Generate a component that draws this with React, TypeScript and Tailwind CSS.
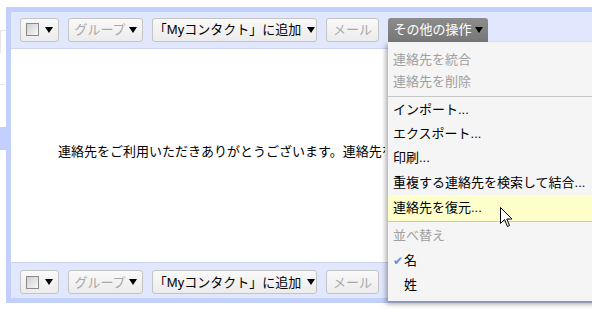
import React from 'react';

const font = { fontFamily: '"Liberation Sans", "Noto Sans CJK JP", sans-serif' };

const Caret = ({ color = '#000' }: { color?: string }) => (
  <svg width="8" height="6" viewBox="0 0 8 6" className="shrink-0">
    <path d="M0 0 H8 L4 6 Z" fill={color} />
  </svg>
);

const Btn: React.FC<{ w: string; children: React.ReactNode; dim?: boolean }> = ({ w, children, dim }) => (
  <div
    className={`${w} h-6 shrink-0 flex items-center justify-center gap-[3px] rounded-[3px] border border-[#c4c4c4] bg-gradient-to-b from-[#f9f9f9] to-[#ececec] text-[13px] leading-none ${dim ? 'text-[#a8a8a8]' : 'text-black'}`}
  >
    {children}
  </div>
);

const Toolbar: React.FC<{ withMore?: boolean }> = ({ withMore }) => (
  <>
    <Btn w="w-[39px]">
      <span className="w-[13px] h-[13px] border border-[#8a8a8a] bg-gradient-to-br from-[#cfcfcf] to-[#f8f8f8]" />
      <span className="ml-[3px]"><Caret /></span>
    </Btn>
    <Btn w="w-[75px]" dim>
      グループ<Caret />
    </Btn>
    <Btn w="w-[165px]">
      「Myコンタクト」に追加 <span className="ml-[3px]"><Caret /></span>
    </Btn>
    <Btn w="w-[53px]" dim>
      メール
    </Btn>
    {withMore && (
      <div className="relative shrink-0">
        <div className="w-[100px] h-6 flex items-center justify-center gap-[3px] rounded-t-[3px] bg-gradient-to-b from-[#8c8c8c] to-[#777] text-white text-[13px] leading-none">
          その他の操作<Caret />
        </div>
        <MoreMenu />
      </div>
    )}
  </>
);

const Item: React.FC<{ h?: string; dim?: boolean; hot?: boolean; children: React.ReactNode }> = ({ h = 'h-6', dim, hot, children }) => (
  <div className={`${h} flex items-center pl-[5px] whitespace-nowrap ${dim ? 'text-[#a0a0a0]' : 'text-black'} ${hot ? 'bg-[#ffffcc]' : ''}`}>
    {children}
  </div>
);

const MoreMenu = () => (
  <div className="absolute left-0 top-full z-10 w-[230px] bg-[#f5f5f5] pt-[7px] pb-[4px] text-[13px] leading-none shadow-[-2px_3px_5px_rgba(0,0,0,0.35)]">
    <Item h="h-[22px]" dim>連絡先を統合</Item>
    <Item h="h-[22px]" dim>連絡先を削除</Item>
    <div className="mt-[3px] mb-px h-px bg-[#c8c8c8]" />
    <Item>インポート...</Item>
    <Item>エクスポート...</Item>
    <Item>印刷...</Item>
    <Item h="h-[25px]">重複する連絡先を検索して結合...</Item>
    <Item h="h-[26px]" hot>連絡先を復元...</Item>
    <div className="h-px bg-[#c8c8c8]" />
    <Item h="h-[27px]" dim>並べ替え</Item>
    <Item>
      <span className="w-[11px] text-[#5b8eef] text-[12px]">✔</span>名
    </Item>
    <Item>
      <span className="w-[11px]" />姓
    </Item>
  </div>
);

const Cursor = () => (
  <svg width="13" height="21" viewBox="0 0 13 21" className="absolute left-[500px] top-[207px] z-20">
    <path d="M0.5 0.5 V16.5 L4.5 12.5 L7.5 19.5 L9.5 18.5 L6.8 12 H12 Z" fill="#fff" stroke="#000" strokeWidth="1" strokeLinejoin="round" />
  </svg>
);

export default function App() {
  return (
    <div className="relative w-[592px] h-[315px] overflow-hidden bg-white pt-[7px]" style={font}>
      <div className="flex">
        {/* remnants of the page behind */}
        <div className="w-[6px] shrink-0 flex flex-col">
          <div className="h-[23px]" />
          <div className="h-[23px] border-t border-l border-[#e6e6e6]" />
          <div className="h-[31px]" />
          <div className="h-px bg-[#e6e6e6]" />
          <div className="h-[42px]" />
          <div className="h-[23px] bg-[#c3cffc]" />
        </div>

        <div className="w-[600px] shrink-0 border-[5px] border-r-0 border-[#c3cffc] flex flex-col">
          <div className="h-[37px] bg-[#e1e8fd] border-b border-[#cbd5f0] flex items-center pl-[9px] pb-px gap-[9px]">
            <Toolbar withMore />
          </div>

          <div className="h-[213px] bg-white pl-[47px] pt-[95px]">
            <div className="w-[327px] overflow-hidden text-[13px] leading-[16px] text-black whitespace-nowrap">
              連絡先をご利用いただきありがとうございます。連絡先を簡単に管理できます。
            </div>
          </div>

          <div className="h-[36px] bg-[#e1e8fd] border-t border-[#cbd5f0] flex items-start pt-[7px] pl-[9px] gap-[9px]">
            <Toolbar />
          </div>
        </div>
      </div>
      <Cursor />
    </div>
  );
}
